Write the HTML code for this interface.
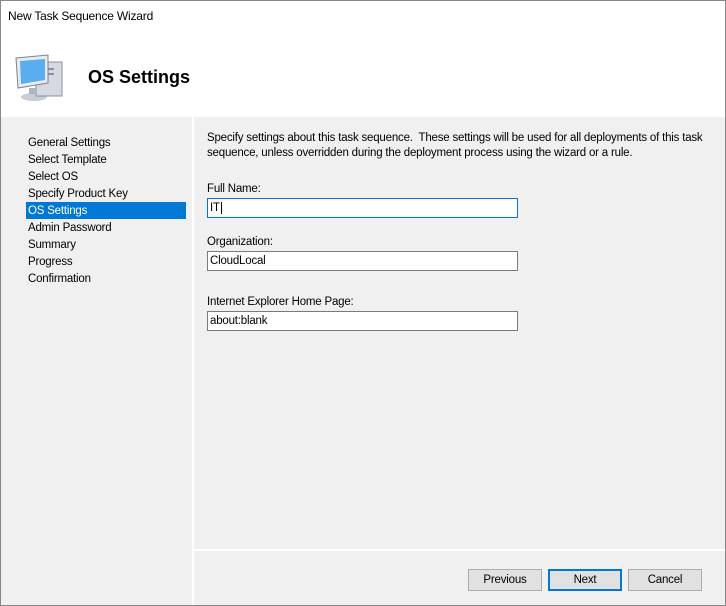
<!DOCTYPE html>
<html><head><style>
*{margin:0;padding:0;box-sizing:border-box}
body{width:726px;height:606px;background:#fff;font-family:"Liberation Sans",sans-serif;font-size:11.5px;color:#000;position:relative;overflow:hidden;letter-spacing:-0.2px}
.abs{position:absolute}
.nav div{position:absolute;left:28px;height:17px;line-height:17px;white-space:nowrap}
.tb{position:absolute;left:207px;width:311px;height:20px;background:#fff;border:1px solid #7a7a7a;padding-left:2px;line-height:19px}
.btn{position:absolute;top:569px;width:74px;height:22px;background:#e1e1e1;border:1px solid #adadad;text-align:center;line-height:21px}
</style></head><body>
<div class="abs" style="left:8px;top:9px;font-size:12px">New Task Sequence Wizard</div>
<svg class="abs" style="left:12px;top:50px" width="56" height="56" viewBox="0 0 56 56">
<ellipse cx="22" cy="47" rx="13" ry="4" fill="#c8ccd4"/>
<rect x="24" y="12" width="26" height="34" fill="#d6d9e2" stroke="#8a90a0"/>
<rect x="28" y="18" width="14" height="2" fill="#8a90a0"/><rect x="28" y="23" width="14" height="2" fill="#8a90a0"/>
<polygon points="4,8 36,5 36,33 6,38" fill="#e8ecf2" stroke="#7a8090"/>
<polygon points="8,11 33,9 33,30 9,34" fill="#5aaef0"/>
<rect x="17" y="38" width="8" height="6" fill="#b0b4c0"/>
</svg>
<div class="abs" style="left:88px;top:67px;font-size:18px;font-weight:bold;letter-spacing:0">OS Settings</div>
<div class="abs" style="left:1px;top:117px;width:191px;height:488px;background:#f0f0f0"></div>
<div class="abs" style="left:194px;top:117px;width:531px;height:488px;background:#f0f0f0"></div>
<div class="abs" style="left:194px;top:549px;width:531px;height:2px;background:#fff"></div>
<div class="abs" style="left:26px;top:202px;width:160px;height:17px;background:#0078d7"></div>
<div class="nav">
<div style="top:135px">General Settings</div>
<div style="top:152px">Select Template</div>
<div style="top:169px">Select OS</div>
<div style="top:186px">Specify Product Key</div>
<div style="top:203px;color:#fff">OS Settings</div>
<div style="top:220px">Admin Password</div>
<div style="top:237px">Summary</div>
<div style="top:254px">Progress</div>
<div style="top:271px">Confirmation</div>
</div>
<div class="abs" style="left:207px;top:131px;width:500px;line-height:15px">Specify settings about this task sequence.&nbsp; These settings will be used for all deployments of this task<br>sequence, unless overridden during the deployment process using the wizard or a rule.</div>
<div class="abs" style="left:207px;top:183px">Full Name:</div>
<div class="tb" style="top:198px;border-color:#0078d7">IT<span style="border-left:1px solid #000;margin-left:1px"></span></div>
<div class="abs" style="left:207px;top:236px">Organization:</div>
<div class="tb" style="top:251px">CloudLocal</div>
<div class="abs" style="left:207px;top:296px">Internet Explorer Home Page:</div>
<div class="tb" style="top:311px">about:blank</div>
<div class="btn" style="left:468px">Previous</div>
<div class="btn" style="left:548px;border:2px solid #0078d7;line-height:19px">Next</div>
<div class="btn" style="left:628px">Cancel</div>
<div class="abs" style="left:0;top:0;width:726px;height:606px;border:1px solid #888"></div>
</body></html>
